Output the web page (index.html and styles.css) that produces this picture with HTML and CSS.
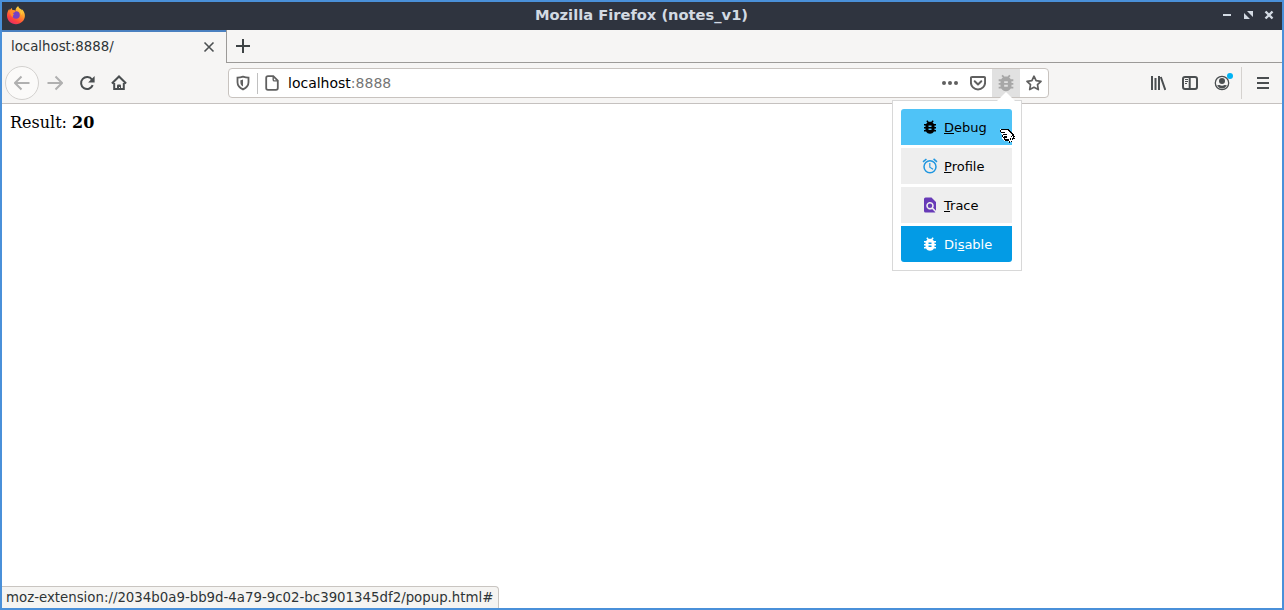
FILE: index.html
```html
<!DOCTYPE html>
<html lang="en">
<head>
<meta charset="utf-8">
<title>Mozilla Firefox (notes_v1)</title>
<link rel="stylesheet" href="styles.css">
</head>
<body>
<svg width="0" height="0" class="defs">
  <symbol id="bug" viewBox="0 0 24 24"><path d="M20 8h-2.81c-.45-.78-1.07-1.45-1.82-1.96L17 4.41 15.59 3l-2.17 2.17C12.96 5.06 12.49 5 12 5s-.96.06-1.41.17L8.41 3 7 4.41l1.62 1.63C7.88 6.55 7.26 7.22 6.81 8H4v2h2.09c-.05.33-.09.66-.09 1v1H4v2h2v1c0 .34.04.67.09 1H4v2h2.81c1.04 1.79 2.97 3 5.19 3s4.15-1.21 5.19-3H20v-2h-2.09c.05-.33.09-.66.09-1v-1h2v-2h-2v-1c0-.34-.04-.67-.09-1H20V8zm-6 8h-4v-2h4v2zm0-4h-4v-2h4v2z"/></symbol>
</svg>
<div class="window">
  <header class="titlebar">
    <svg class="logo" viewBox="0 0 20 20">
      <defs>
        <linearGradient id="fire" x1="0.85" y1="0" x2="0.25" y2="1"><stop offset="0" stop-color="#fff04a"/><stop offset=".4" stop-color="#ff9a2a"/><stop offset=".75" stop-color="#ff453c"/><stop offset="1" stop-color="#e32a6b"/></linearGradient>
      </defs>
      <path fill="url(#fire)" d="M12.200 1c.2 1.400 1.100 2.200 2.400 3 .7.500 1.200 1.100 1.600 1.800-.1-.8-.4-1.400-.7-1.900 2 1.500 3.600 4.300 3.400 7.200-.3 4.700-4.100 8.100-8.900 8.100-5 0-9-3.800-9-8.700 0-2.400.8-4.800 2.400-6.700 0 .7.100 1.200.3 1.700.5-1 1.300-1.900 2.300-2.500-.1.900.1 1.500.5 2.100 1.200-.1 2.200.1 3 .6C9.600 3.700 10.600 2.100 12.200 1z"/>
      <circle cx="10" cy="10" r="3.800" fill="#7542c5"/>
      <path fill="#ff8b2d" d="M4 5.300c2-.6 3.800-.3 5.300.8 0 1-.8 1.500-1.900 1.700-.4.800-.2 1.500.6 2-1.200.5-1.600 1.500-.7 2.600-2.200-.6-3.500-3.300-3.300-7.100z"/>
      <path fill="#ffc43b" d="M11.500 4c2.400 1 3.800 3.300 3.500 6 1-.8 1.300-1.800 1.300-3-.8-1.600-2.600-2.700-4.800-3z"/>
    </svg>
    <h1 class="title">Mozilla Firefox (notes_v1)</h1>
    <svg class="controls" viewBox="0 0 52 12" fill="#d3dae3">
      <path d="M1 5h8v2H1z"/>
      <path d="M25 2h6v6zM22 4v6h6z"/>
      <path d="M43.500 2.500l7 7m0-7l-7 7" stroke="#d3dae3" stroke-width="2.400"/>
    </svg>
  </header>

  <div class="tabs">
    <div class="tab"><span>localhost:8888/</span>
      <svg class="tab-close" viewBox="0 0 12 12"><path d="M1.500 1.500l9 9m0-9l-9 9"/></svg>
    </div>
    <div class="tabs-rest"><svg class="plus" viewBox="0 0 16 16"><path d="M8 1v14M1 8h14"/></svg></div>
  </div>

  <nav class="navbar">
    <div class="nav-left">
      <span class="back"><svg class="ic dim" viewBox="0 0 16 16"><path d="M15.500 8H1.300M7.500 1.500L1 8l6.500 6.500"/></svg></span>
      <svg class="ic dim" viewBox="0 0 16 16"><path d="M.5 8h14.200M8.500 1.500L15 8l-6.500 6.500"/></svg>
      <svg class="ic" viewBox="0 0 16 16"><path d="M13.700 10.200A6 6 0 1 1 13 4.600"/><path class="solid" d="M15.600 1v6.500H9.100z"/></svg>
      <svg class="ic" viewBox="0 0 16 16"><path d="M.9 8.500L8 1.500l7.100 7M3.200 8v6.100h9.600V8"/><path class="solid" d="M6 15v-4.500q0-1 1-1h2q1 0 1 1V15z"/><path stroke="#f6f5f4" stroke-width="1" d="M8.500 12v1"/></svg>
    </div>
    <div class="urlbar">
      <svg class="ic grey shield" viewBox="0 0 16 16"><path d="M8 1.700c2 .7 3.800 1 5.500 1v4.500c0 3.200-2 5.500-5.500 7.200-3.500-1.700-5.500-4-5.500-7.200V2.700c1.700 0 3.500-.3 5.500-1z"/><path class="solid" d="M8 4.500v7C6.200 10.500 5.400 9.200 5.400 7.200V5.200Q6.800 5 8 4.500z"/></svg>
      <i class="divider"></i>
      <svg class="ic grey page" viewBox="0 0 16 16"><path d="M4 1.200h5.300l4.500 4.500V13q0 1.800-1.800 1.800H4Q2.200 14.800 2.200 13V3Q2.200 1.200 4 1.200z"/><path stroke-width="1.400" d="M9.200 1.500v3.200q0 1.200 1.200 1.200h3.200"/></svg>
      <span class="address">localhost<span class="port">:8888</span></span>
      <svg class="ic grey" viewBox="0 0 16 16"><g class="solid"><circle cx="2" cy="8" r="2"/><circle cx="8" cy="8" r="2"/><circle cx="14" cy="8" r="2"/></g></svg>
      <svg class="ic grey" viewBox="0 0 16 16"><path d="M2.200 2h11.600q1.300 0 1.300 1.300V7.500a7.100 6.900 0 0 1-14.200 0V3.300Q.9 2 2.200 2z"/><path d="M4.700 6.300L8 9.500l3.300-3.200" stroke-linecap="round" stroke-linejoin="round"/></svg>
      <span class="action"><svg class="bug"><use href="#bug"/></svg></span>
      <svg class="ic grey star" viewBox="0 0 16 16"><path stroke-linejoin="round" d="M8 1.200l2.100 4.400 4.900.7-3.500 3.400.8 4.900L8 12.300l-4.300 2.300.8-4.900L1 6.300l4.900-.7z"/></svg>
    </div>
    <div class="nav-right">
      <svg class="ic" viewBox="0 0 16 16"><path d="M2 1v14M5.500 3v12M9 1v14M10.800 2l4.500 13"/></svg>
      <svg class="ic" viewBox="0 0 16 16"><rect x="1" y="2" width="14" height="12" rx="2"/><path d="M7.700 2v12"/><path stroke-width="1" d="M3 4.500h3M3 6.500h3M3 8.500h2"/></svg>
      <svg class="ic account" viewBox="0 0 20 20"><g transform="translate(0 3)"><circle cx="8" cy="9" r="6.700" stroke-width="1.300"/><circle class="solid" cx="8" cy="7" r="3"/><path class="solid" d="M3 11.500q1-.7 2.500-.5Q8 12.500 10.500 11q1.500-.2 2.500.5Q11 14.400 8 14.400T3 11.500z"/></g><circle cx="16" cy="5" r="3" class="dot"/></svg>
      <i class="toolbar-line"></i>
      <svg class="ic menu" viewBox="0 0 16 16"><path d="M2 3h12M2 8h12M2 13h12"/></svg>
    </div>
  </nav>

  <main class="content">Result: <b>20</b></main>

  <div class="popup">
    <svg class="arrow" viewBox="0 0 20 10"><path d="M0 10L10 0l10 10z"/></svg>
    <a class="item debug"><svg><use href="#bug"/></svg><span><u>D</u>ebug</span></a>
    <a class="item"><svg viewBox="0 0 24 24" fill="#1e96e0"><path d="M22 5.700l-4.600-3.900-1.300 1.500 4.600 3.900L22 5.700zM7.900 3.400L6.600 1.900 2 5.700l1.300 1.500 4.600-3.800zM12.500 8H11v6l4.700 2.900.8-1.200-4-2.400V8zM12 4a9 9 0 1 0 0 18 9 9 0 0 0 0-18zm0 16a7 7 0 1 1 0-14 7 7 0 0 1 0 14z"/></svg><span><u>P</u>rofile</span></a>
    <a class="item"><svg viewBox="0 0 24 24" fill="#673ab7"><path d="M20 19.600V8l-6-6H6a2 2 0 0 0-2 2v16a2 2 0 0 0 2 2h12c.4 0 .8-.2 1.200-.4l-4.400-4.400A5 5 0 1 1 17 13c0 1-.3 2-.8 2.800L20 19.600zM9 13a3 3 0 1 0 6 0 3 3 0 0 0-6 0z"/></svg><span><u>T</u>race</span></a>
    <a class="item disable"><svg><use href="#bug"/></svg><span>Di<u>s</u>able</span></a>
    <svg class="cursor" viewBox="0 0 17 17" shape-rendering="crispEdges">
      <path fill="#fff" d="M1 1h8l5 5 2 3-6 6-2-2H5L3 10V7L1 3z"/>
      <path fill="none" stroke="#000" d="M2 1.500h7M1.500 2v2M2 4.500h4M4 6.500h4M3.500 7v2M4 9.500h4M5.500 10v2M6 12.500h3M9 1.500l5.500 5.500M5 8.500h3M6 11.500h3"/>
      <path fill="none" stroke="#000" stroke-dasharray="1 1" d="M9.500 12L14.500 7M10 13.500L15 8.500M10.500 15L16 9.500M14 7l2 2M9 12.500l2 2.500"/>
    </svg>
  </div>

  <footer class="status">moz-extension://2034b0a9-bb9d-4a79-9c02-bc3901345df2/popup.html#</footer>
</div>
</body>
</html>
```
FILE: styles.css
```css
* { box-sizing: border-box; }
body { margin: 0; font: 13.333px "DejaVu Sans", sans-serif; color: #2e3436; }
.defs { position: absolute; }
.window { position: relative; display: flex; flex-direction: column; width: 1284px; height: 610px; border: 2px solid #4a90d9; background: #fff; overflow: hidden; }

.titlebar { height: 28px; flex: none; display: flex; align-items: center; justify-content: space-between; background: #2f343f; padding: 0 8px 2px 4px; }
.logo { width: 20px; height: 20px; margin-right: 35px; }
.title { margin: 0; font-size: 14.667px; line-height: 20px; font-weight: bold; color: #d3dae3; }
.controls { width: 52px; height: 12px; }

.tabs { display: flex; flex: none; height: 33px; background: #f6f5f4; }
.tab { width: 224px; border-top: 2px solid #4a80c0; display: flex; align-items: center; justify-content: space-between; padding: 0 11px 1px 9px; }
.tab span { padding-bottom: 2px; }
.tab-close { width: 12px; height: 12px; stroke: #4c5052; stroke-width: 1.600; }
.tabs-rest { flex: 1; border-left: 1px solid #9c9a98; border-bottom: 1px solid #9c9a98; padding: 8px; }
.plus { display: block; width: 16px; height: 16px; stroke: #3e4345; stroke-width: 2; }

.navbar { height: 41px; flex: none; display: flex; align-items: center; background: #f6f5f4; border-bottom: 1px solid #c5c1bf; }
.ic { width: 16px; height: 16px; flex: none; fill: none; stroke: #4a4e50; stroke-width: 2; }
.ic .solid { fill: #4a4e50; stroke: none; }
.ic.dim { stroke: #b0b0b0; }
.ic.grey { stroke: #606060; }
.ic.grey .solid { fill: #606060; }
.nav-left { display: flex; align-items: center; gap: 16px; width: 226px; padding-left: 3px; }
.back { width: 34px; height: 34px; margin-right: -8px; border: 1px solid #d3d1cf; border-radius: 50%; background: #fbfaf9; display: grid; place-items: center; }
.urlbar { width: 821px; height: 30px; display: flex; align-items: center; gap: 12px; padding: 0 6px; border: 1px solid #c8c3bf; border-radius: 4px; background: #fff; }
.shield { stroke-width: 1.800; }
.divider { width: 1px; height: 21px; background: #c0c0c0; margin: 0 -6px 0 -6px; }
.page { stroke-width: 1.800; }
.address { flex: 1; margin-left: -4px; font-size: 14px; line-height: 20px; color: #000; }
.port { color: #757575; }
.action { width: 28px; height: 28px; margin: 0 -6px; background: #e1e1e1; display: grid; place-items: center; }
.bug { width: 22px; height: 22px; fill: #a7a7a7; }
.star { stroke-width: 1.700; }
.nav-right { flex: 1; display: flex; align-items: center; justify-content: flex-end; gap: 16px; padding-right: 11px; }
.ic.account { width: 20px; height: 20px; margin: -4px -4px 0 0; }
.ic .dot { fill: #00b3f4; stroke: none; }
.toolbar-line { width: 1px; height: 32px; background: #d5d2cf; margin: 0 -3px 0 -5px; }

.content { flex: 1; padding: 9px 8px; font: 16px/20px "DejaVu Serif", serif; color: #000; }

.popup { position: absolute; left: 890px; top: 98px; width: 130px; height: 171px; padding: 9px 9px 8px 8px; border: 1px solid #d8d8d8; background: #fff; display: flex; flex-direction: column; gap: 3px; font-size: 13px; color: #000; }
.arrow { position: absolute; left: 103px; top: -9px; width: 20px; height: 10px; fill: #fff; }
.item { height: 36px; flex: none; width: 111px; display: flex; align-items: center; gap: 5px; padding-left: 20px; background: #eee; line-height: 18px; }
.item svg { width: 18px; height: 18px; }
.item span { padding-top: 2px; }
.item u { text-underline-offset: 1px; }
.debug { background: #4fc3f7; border-radius: 3px 3px 0 0; margin-top: -1px; }
.disable { background: #039be5; border-radius: 0 0 3px 3px; color: #fff; }
.disable svg { fill: #fff; }
.cursor { position: absolute; left: 106px; top: 27px; width: 17px; height: 17px; }

.status { position: absolute; left: 0; bottom: 0; width: 497px; height: 22px; padding: 1px 0 0 4px; line-height: 20px; white-space: nowrap; background: #f5f4f2; border: 1px solid #c9c5c1; border-left: 0; border-bottom: 0; border-radius: 0 4px 0 0; }
```
